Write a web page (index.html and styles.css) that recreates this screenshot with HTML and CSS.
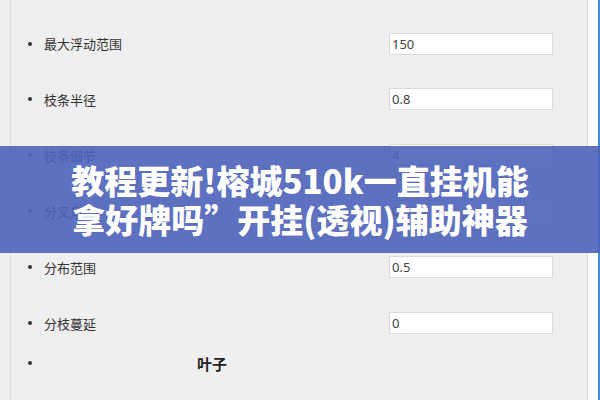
FILE: index.html
```html
<!DOCTYPE html>
<html lang="zh-CN">
<head>
<meta charset="utf-8">
<title>枝条参数</title>
<link rel="stylesheet" href="styles.css">
</head>
<body>
<div class="window">
  <div class="panel">
    <ul class="props">
      <li class="row"><span class="label">最大浮动范围</span><span class="field">150</span></li>
      <li class="row"><span class="label">枝条半径</span><span class="field">0.8</span></li>
      <li class="row"><span class="label">枝条细节</span><span class="field">4</span></li>
      <li class="row"><span class="label">分叉角度</span><span class="field">0.6</span></li>
      <li class="row"><span class="label">分布范围</span><span class="field">0.5</span></li>
      <li class="row"><span class="label">分枝蔓延</span><span class="field">0</span></li>
      <li class="row section"><span class="heading">叶子</span></li>
    </ul>
  </div>
  <div class="gutter"></div>
  <div class="edge"></div>
</div>
<div class="banner">
  <p class="banner-text">教程更新!榕城510k一直挂机能<br>拿好牌吗”开挂(透视)辅助神器</p>
</div>
</body>
</html>
```

FILE: styles.css
```css
html, body {
  margin: 0;
  padding: 0;
  width: 600px;
  height: 400px;
  overflow: hidden;
  background: #efefef;
  font-family: "Noto Sans CJK SC", "Noto Sans", sans-serif;
}

.window {
  display: flex;
  height: 400px;
}

.panel {
  flex: 1;
  margin-left: 10px;
  border-left: 1px solid #dcdcdc;
  border-right: 1px solid #d9d9d9;
  background: #efefef;
}

.gutter {
  width: 10px;
  background: #ffffff;
}

.edge {
  width: 2px;
  background: #3f8fd8;
}

.props {
  list-style: none;
  margin: 0;
  padding: 16px 0 0 0;
}

.row {
  display: flex;
  align-items: center;
  height: 56px;
  position: relative;
  padding-left: 33px;
}

.row:first-child {
  height: 55px;
}

.row::before {
  content: "";
  position: absolute;
  left: 17px;
  top: 50%;
  width: 4px;
  height: 4px;
  margin-top: -2px;
  border-radius: 50%;
  background: #333;
}

.label {
  width: 345px;
  font-size: 13px;
  color: #333;
}

.field {
  box-sizing: border-box;
  width: 164px;
  height: 22px;
  background: #fff;
  border: 1px solid #dadada;
  padding-left: 2px;
  font-family: "Noto Sans", sans-serif;
  font-size: 13px;
  line-height: 20px;
  color: #444;
}

.section {
  height: 24px;
}

.heading {
  margin-left: 153px;
  font-size: 15px;
  font-weight: bold;
  color: #222;
}

.banner {
  position: absolute;
  left: 0;
  top: 146px;
  width: 600px;
  height: 107px;
  background: rgba(78, 98, 186, 0.9);
  display: flex;
  align-items: center;
  justify-content: center;
}

.banner-text {
  margin: 0;
  text-align: center;
  color: #fff;
  font-family: "Noto Sans CJK SC", sans-serif;
  font-weight: 900;
  font-size: 33px;
  line-height: 39px;
}
```
